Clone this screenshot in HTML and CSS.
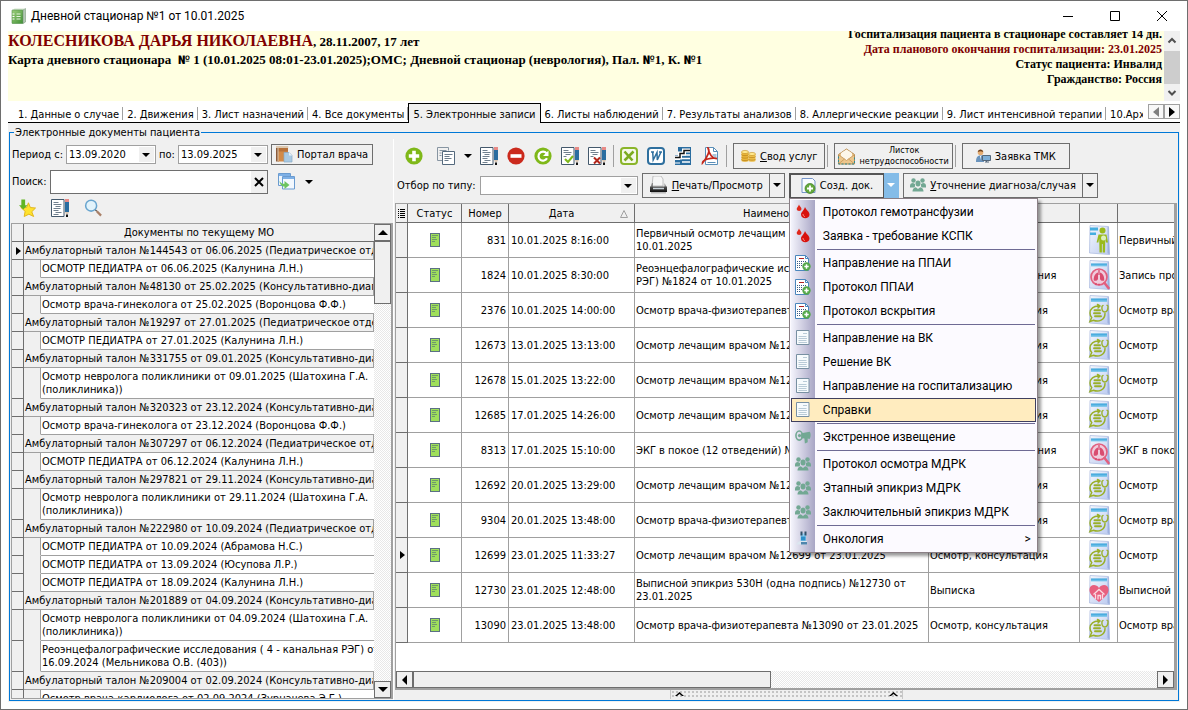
FILE: index.html
```html
<!DOCTYPE html>
<html lang="ru">
<head>
<meta charset="utf-8">
<title>Дневной стационар №1 от 10.01.2025</title>
<link rel="stylesheet" href="styles.css">
</head>
<body>
<svg class="sprite" aria-hidden="true">
  <defs>
    <linearGradient id="gBook" x1="0" y1="0" x2="1" y2="1"><stop offset="0" stop-color="#9fd07c"/><stop offset="1" stop-color="#3f8f35"/></linearGradient>
    <linearGradient id="gDoc" x1="0" y1="0" x2="1" y2="1"><stop offset="0" stop-color="#f4f7fd"/><stop offset="1" stop-color="#bccbf0"/></linearGradient>
    <linearGradient id="gBar" x1="0" y1="0" x2="0" y2="1"><stop offset="0" stop-color="#2f9fd8"/><stop offset="1" stop-color="#8fd0f0"/></linearGradient>
    <linearGradient id="gPrn" x1="0" y1="0" x2="0" y2="1"><stop offset="0" stop-color="#555"/><stop offset="1" stop-color="#111"/></linearGradient>
    <symbol id="status" viewBox="0 0 10 14"><rect x=".5" y=".5" width="9" height="13" fill="#9fe05a" stroke="#5b7083"/><path d="M2 2.500h6M2 4.500h4M2 6.500h5M2 8.500h3" stroke="#6f9a6a"/></symbol>
    <symbol id="page" viewBox="0 0 24 32"><path d="M3 1.500L21.500 2.500L22.500 30.500L2.500 29Z" fill="url(#gDoc)" stroke="#a9b9de" stroke-width=".7"/><path d="M20.500 3v26l2 1.500L21.500 3Z" fill="#8fa5d8" opacity=".7"/></symbol>
    <symbol id="d-exam" viewBox="0 0 24 32"><use href="#page"/><rect x="4" y="4.500" width="16" height="3.500" fill="url(#gBar)"/><g fill="none" stroke="#9ab02a" stroke-width="1.500" stroke-linecap="round"><path d="M12.500 12C6.500 11.500 3 15 3 19c0 2 .7 3.500 1.700 4.500L3 27.500l3.500-1.300C11.500 28.500 18 26 18 19.500M13 12l-2.500-1.500M13 12l-2 2"/><path d="M7.500 16.200h5.500M7 19.200h6M8 22.200h6" stroke-width="1.900"/><path d="M15 12.500c-.5 3.500.8 5.500 2.800 5.500s3.500-2.500 3.200-6M15 12.300l1-.8M21 12l-1-.7" stroke-width="1.400"/></g></symbol>
    <symbol id="d-lung" viewBox="0 0 24 32"><use href="#page"/><rect x="4" y="4.500" width="16" height="3" fill="url(#gBar)"/><circle cx="12" cy="18" r="8" fill="#f0cbdc" stroke="#e2607f" stroke-width="1.700"/><path d="M17.500 24l4 5" stroke="#e2607f" stroke-width="2.600" stroke-linecap="round"/><path d="M11 13.500c-3.500 1-4.500 5-4.200 8 2 .8 4.200-.3 4.200-1.800zM13 13.500c3.500 1 4.500 5 4.200 8-2 .8-4.200-.3-4.200-1.800z" fill="#d94d70"/><path d="M12 11v5M8 25h2M11 25.500h2" stroke="#d94d70" stroke-width="1.300"/></symbol>
    <symbol id="d-man" viewBox="0 0 24 32"><use href="#page"/><path d="M3 3.500h8v3H3zM3 8.500h6v2.500H3z" fill="#45aee0"/><circle cx="15.500" cy="6.500" r="3" fill="#9aba1c"/><path d="M11.500 10.500h8l1.500 8h-2l-.7-4-.3 14h-2.300v-8.500h-.8V28.500h-2.400l-.3-14-.8 4h-1.800z" fill="#9aba1c"/><circle cx="16.500" cy="14" r="2.500" fill="#dcefc0"/></symbol>
    <symbol id="d-heart" viewBox="0 0 24 32"><use href="#page"/><rect x="4" y="4.500" width="16" height="3" fill="url(#gBar)"/><path d="M12 28C5 22.500 2 19 2.500 15 3 10.500 9 9.500 12 14c3-4.500 9-3.500 9.500 1 .5 4-2.500 7.500-9.500 13z" fill="#e8607f"/><path d="M6.500 20.500L12 15.500l5.500 5M8.500 20v5M15.500 20v5M11 25.500v-4h2.500v4" fill="none" stroke="#fbd9e2" stroke-width="1.300"/></symbol>
    <symbol id="i-book" viewBox="0 0 16 16"><path d="M2 2l1.500-1.500h10L12.500 2z" fill="#d7e6d2"/><rect x="1" y="2" width="11" height="13.500" rx=".5" fill="url(#gBook)" stroke="#4f8f46" stroke-width=".6"/><path d="M12 2l2.500-1.500V14L12 15.500z" fill="#b5c9b6" stroke="#6c8f6c" stroke-width=".5"/><path d="M5.500 6h4M5.500 8.500h4M5.500 11h4" stroke="#e6f5dc"/><path d="M1.500 6h2M1.500 8.500h2M1.500 11h2" stroke="#fff"/></symbol>
    <symbol id="i-add" viewBox="0 0 18 18"><circle cx="9" cy="9" r="8.600" fill="#7fb819"/><path d="M9 3.800v10.400M3.800 9h10.400" stroke="#fff" stroke-width="3.600"/></symbol>
    <symbol id="i-copy" viewBox="0 0 18 18"><path d="M.5.500h11v3M.5.500v13h5M2.500 3.500h7M2.500 6h2M2.500 8.500h2" fill="none" stroke="#8795a2"/><path d="M5.500 4.500h12v13h-12z" fill="#fff" stroke="#54697d"/><path d="M7.500 7.500h8M7.500 9.500h5M7.500 11.500h7M7.500 13.500h4" stroke="#6b7b8b"/></symbol>
    <symbol id="i-edit" viewBox="0 0 19 18"><path d="M.5.500h12.500v17H.5z" fill="#fff" stroke="#44596c"/><path d="M2.500 3.500h5M2.500 5.500h8M4.500 7.500h5M2.500 9.500h7M2.500 11.500h5M4.500 13.500h6M2.500 15.500h5" stroke="#71808e"/><path d="M14 0h4v3h-4z" fill="#e88a86"/><path d="M14 3h4v10h-4z" fill="#2a6da0"/><path d="M14 13h4l-1 2h-2z" fill="#d9c7b5"/><path d="M15 15.500h2V18h-2z" fill="#111"/></symbol>
    <symbol id="i-ok" viewBox="0 0 19 18"><path d="M.5.500h12.500v17H.5z" fill="#fff" stroke="#44596c"/><path d="M2.500 3.500h5M2.500 5.500h8M4.500 7.500h5M2.500 9.500h3" stroke="#71808e"/><path d="M14 0h4v3h-4z" fill="#e88a86"/><path d="M14 3h4v10h-4z" fill="#2a6da0"/><path d="M14 13h4l-1 2h-2z" fill="#d9c7b5"/><path d="M15 15.500h2V18h-2z" fill="#111"/><path d="M4 12l3 3 5-6" fill="none" stroke="#7fb819" stroke-width="2"/></symbol>
    <symbol id="i-no" viewBox="0 0 19 18"><path d="M.5.500h12.500v17H.5z" fill="#fff" stroke="#44596c"/><path d="M2.500 3.500h5M2.500 5.500h8M4.500 7.500h5M2.500 9.500h3" stroke="#71808e"/><path d="M14 0h4v3h-4z" fill="#e88a86"/><path d="M14 3h4v10h-4z" fill="#2a6da0"/><path d="M14 13h4l-1 2h-2z" fill="#d9c7b5"/><path d="M15 15.500h2V18h-2z" fill="#111"/><path d="M6 10.500l6 6M12 10.500l-6 6" fill="none" stroke="#b3261b" stroke-width="2"/></symbol>
    <symbol id="i-del" viewBox="0 0 18 18"><circle cx="9" cy="9" r="8.600" fill="#cb2a1d"/><path d="M3.500 9h11" stroke="#fff" stroke-width="3.600"/></symbol>
    <symbol id="i-ref" viewBox="0 0 18 18"><circle cx="9" cy="9" r="8.600" fill="#7fb819"/><path d="M12.500 6.300A4.500 4.500 0 1 0 13 11.200" fill="none" stroke="#fff" stroke-width="2.200"/><path d="M14.500 3.500V9H9z" fill="#fff"/></symbol>
    <symbol id="i-xls" viewBox="0 0 18 18"><rect x="1" y="1" width="16" height="16" rx="3" fill="#f5f8ea" stroke="#8ab52a" stroke-width="2"/><path d="M4.500 4.500l8 9M13.500 4.500l-9 9" fill="none" stroke="#7cab20" stroke-width="2.600"/></symbol>
    <symbol id="i-doc" viewBox="0 0 18 18"><rect x="1" y="1" width="16" height="16" rx="3" fill="#fff" stroke="#2e6f9e" stroke-width="2"/><path d="M4 5h3M5.700 5l.5 8L10 5.500l.3 7.500 3.700-8M12 5h3" fill="none" stroke="#2e6f9e" stroke-width="1.500"/></symbol>
    <symbol id="i-calc" viewBox="0 0 18 18"><path d="M4 0h13v18H1V8h3z" fill="#2a6da0"/><path d="M8 8h8M8 11.500h8M8 15h8" stroke="#fff" stroke-width="1.600"/><path d="M1 12.500h5M1 16h5" stroke="#fff" stroke-width="1.200"/><path d="M1 10.500h5v-4h4V3.500h6" fill="none" stroke="#fff" stroke-width="4"/><path d="M1 10.500h5v-4h4V3.500h6" fill="none" stroke="#111" stroke-width="1.500"/></symbol>
    <symbol id="i-pdf" viewBox="0 0 17 18"><path d="M4 .5h8l4 4v13H4z" fill="#fff" stroke="#5a8fb8"/><path d="M12 .5v4h4M11 8h4M12 10h3M6 15.500h8" fill="none" stroke="#5a8fb8"/><path d="M6.500 1c2 2 .5 8-5.500 15 0-3 9-6 14.500-4.500C11 12 7.500 7 6.500 1z" fill="none" stroke="#c4281c" stroke-width="1.700"/></symbol>
    <symbol id="i-exp" viewBox="0 0 17 17"><path d="M.5.500h12v12H.5z" fill="#eef5fd" stroke="#6a9bd0"/><path d="M1 1h11v2H1z" fill="#7eb0e6"/><path d="M4.500 3.500h12v12.500h-12z" fill="#f3f8fe" stroke="#6a9bd0"/><path d="M5 4h11v2H5z" fill="#7eb0e6"/><path d="M1.500 8c1 2 3 2.800 5 2.800V8l5 4-5 4v-2.500C4 13.500 2 12 1.500 8z" fill="#6cc45f"/></symbol>
    <symbol id="i-star" viewBox="0 0 18 19"><path d="M10 4l2 5 5.500.5-4 4 2 5-5-2.500-5 2.500 1-5.500-4.500-4h6z" fill="#ffe22e" stroke="#dfb419"/><path d="M2.500.500h4v6H9L4.500 11 0 6.500h2.500z" fill="#62b523"/></symbol>
    <symbol id="i-find" viewBox="0 0 19 19"><circle cx="7" cy="7" r="5.800" fill="#e2f3fb" stroke="#68a5cf" stroke-width="1.600"/><path d="M11.500 11.500l1.500 1.500" stroke="#555" stroke-width="1.400"/><path d="M13 13l4.500 4.500" stroke="#aa8068" stroke-width="2.400"/></symbol>
    <symbol id="i-port" viewBox="0 0 17 16"><path d="M0 1h3v14H0z" fill="#8a5a3a"/><path d="M2 1h10v14H2z" fill="#d28a48"/><path d="M2 1h10v4H2z" fill="#b6713a"/><path d="M2 1v14M0 0h12v1H0z" fill="#dcc8b0" stroke="#dcc8b0"/><path d="M8 6h5l3 3v6.500H8z" fill="#a9c9e2" stroke="#88a9c6" stroke-width=".7"/><path d="M13 6v3h3z" fill="#e8f3fa"/></symbol>
    <symbol id="i-print" viewBox="0 0 19 18"><path d="M4 0h8l2 3v7H3z" fill="#f6f6f6" stroke="#aaa" stroke-width=".7"/><path d="M3 7l-1.500 4h16L15.500 7v4H4V7z" fill="#888"/><path d="M1 10.500h17V16H1z" fill="url(#gPrn)"/><path d="M4 12.500h11" stroke="#c9d2d8" stroke-width="1.500"/><path d="M2 16h15v1.500H2z" fill="#bbb"/></symbol>
    <symbol id="i-coin" viewBox="0 0 15 14"><path d="M.5 3v9c0 1 7 1 7 0V3z" fill="#e9b53a"/><ellipse cx="4" cy="3" rx="3.500" ry="1.600" fill="#ffe88e" stroke="#c48d1d" stroke-width=".6"/><path d="M.5 5.500c0 1.500 7 1.500 7 0M.5 8c0 1.500 7 1.500 7 0M.5 10.500c0 1.500 7 1.500 7 0" fill="none" stroke="#b67f18" stroke-width=".7"/><path d="M7.500 5v7c0 1 7 1 7 0V5z" fill="#edbf4c"/><ellipse cx="11" cy="5" rx="3.500" ry="1.600" fill="#ffe88e" stroke="#c48d1d" stroke-width=".6"/><path d="M7.500 7.500c0 1.500 7 1.500 7 0M7.500 10c0 1.500 7 1.500 7 0" fill="none" stroke="#b67f18" stroke-width=".7"/></symbol>
    <symbol id="i-mail" viewBox="0 0 17 16"><path d="M.5 6L8.500.5l8 5.500v9.500H.5z" fill="#ecc68c" stroke="#b98d52"/><path d="M3 4.500L8.500 1l5.500 3.500V8L8.500 12 3 8z" fill="#fdf7ea"/><path d="M1 6.500L8.500 12 16 6.500M1 15l5.500-4.500M16 15l-5.500-4.500" fill="none" stroke="#c79b5f" stroke-width=".9"/><path d="M.5 8v7.500h16V8" fill="none" stroke="#2d8c97" stroke-dasharray="2 1.500"/></symbol>
    <symbol id="i-tmk" viewBox="0 0 15 14"><circle cx="4.500" cy="3.500" r="2.800" fill="#e6ad72"/><path d="M1.800 3C2-.5 7-.5 7.200 3 5.500 2 3.500 2 1.800 3z" fill="#6b3f1c"/><path d="M0 13c0-4 1-6.500 4.500-6.500S8 8 8 13z" fill="#6a94bd"/><path d="M4 7h1v4z" fill="#fff"/><path d="M6.500 6.500h8v5h-8z" fill="#7dafd9" stroke="#54677a"/><path d="M9 13h4M10.500 12v1" stroke="#54677a"/></symbol>
    <symbol id="i-new" viewBox="0 0 14 16"><path d="M.5.500h10.500l2.500 2.500v11.500H.5z" fill="#f8fbff" stroke="#7695c9"/><circle cx="8.500" cy="10.500" r="5" fill="#64a83c" stroke="#3f7d23" stroke-width=".7"/><path d="M8.500 7.500v6M5.500 10.500h6" stroke="#fff" stroke-width="1.800"/></symbol>
    <symbol id="i-team" viewBox="0 0 16 14"><g fill="#72a893"><circle cx="3.500" cy="2.500" r="2.200"/><circle cx="12.500" cy="2.500" r="2.200"/><ellipse cx="8" cy="5.500" rx="2.500" ry="3"/><path d="M0 8c0-2 1-3 3-3l2 1v2.500L4 9.500H0zM16 8c0-2-1-3-3-3l-2 1v2.500l1 1h4zM2.500 13.500c0-2.500 1-3.700 3.300-4.300L8 11l2.200-1.800c2.300.6 3.300 1.800 3.300 4.300z"/></g></symbol>
    <symbol id="i-drop" viewBox="0 0 14 14"><path d="M9 2.500c1 3 4.500 4.500 4.500 7.500 0 5-8.500 5-8.500 0 0-2.500 3-4 4-7.500z" fill="#d8120c"/><path d="M3 0c.5 2 2.500 2.500 2.500 4.500C5.500 7 .7 7 .7 4.500.7 3 2.500 2 3 0z" fill="#e0281c"/><path d="M7 9.500c0 1.500.7 2.500 2 2.500" stroke="#ff8c80" fill="none"/></symbol>
    <symbol id="i-form" viewBox="0 0 16 16"><path d="M.5.500h10l3 3v12H.5z" fill="#fff" stroke="#4a86bd"/><path d="M10.500.5v3h3" fill="none" stroke="#4a86bd"/><path d="M4 3.500h5" stroke="#b32020"/><path d="M2 6.500h9M2 8.500h6M2 10.500h5M2 12.500h4" stroke="#3a5a80" stroke-dasharray="1 1"/><circle cx="11.500" cy="11.500" r="4.200" fill="#55a84a"/><path d="M11.500 9.300v4.400M9.300 11.500h4.400" stroke="#fff" stroke-width="1.500"/></symbol>
    <symbol id="i-list" viewBox="0 0 14 15"><path d="M.5.500h12.500v14H.5z" fill="#f7fbfd" stroke="#7890a2"/><path d="M7 3.500h4M2.500 6.500h8M2.500 8.500h8.500M2.500 10.500h8M2.500 12.500h8.500" stroke="#b9cbd7"/></symbol>
    <symbol id="i-horn" viewBox="0 0 17 15"><path d="M6.500 3.500L15.500 2c1.500 1 1.500 6 0 7.500L13.500 9v4l-3 1.500L10 9 6.500 8.500z" fill="#72a893"/><ellipse cx="4.500" cy="6" rx="3.500" ry="4.800" fill="none" stroke="#72a893" stroke-width="1.700"/><circle cx="4.800" cy="6" r="1.700" fill="#72a893"/></symbol>
    <symbol id="i-onco" viewBox="0 0 14 14"><path d="M4.500 2h5.500v8H4.500z" fill="#8fcdf0"/><path d="M4.500 0h2v4h-2zM8.500 0h2v4h-2z" fill="#31506a"/><path d="M5 5h4.500v4H5z" fill="#2c8fc8"/><path d="M0 13c2-3 3-3.500 5-3.500h6V13z" fill="#dbe6ef"/><path d="M5 10.500h6v2.500H5z" fill="#4f86ad"/></symbol>
  </defs>
</svg>

<header class="titlebar">
  <svg class="ic16"><use href="#i-book"/></svg>
  <h1>Дневной стационар №1 от 10.01.2025</h1>
  <div class="winbtns">
    <button aria-label="Свернуть"><svg width="12" height="12"><path d="M1 6.500h10" stroke="#000"/></svg></button>
    <button aria-label="Развернуть"><svg width="12" height="12"><path d="M1.500 1.500h9v9h-9z" fill="none" stroke="#000"/></svg></button>
    <button aria-label="Закрыть"><svg width="12" height="12"><path d="M1 1l10 10M11 1L1 11" stroke="#000"/></svg></button>
  </div>
</header>

<section class="patient">
  <div class="who">
    <p><span class="name">КОЛЕСНИКОВА ДАРЬЯ НИКОЛАЕВНА</span>, 28.11.2007, 17 лет</p>
    <p class="card">Карта дневного стационара &nbsp;<span class="no">№</span> 1 (10.01.2025 08:01-23.01.2025);ОМС; Дневной стационар (неврология), Пал. <span class="no">№</span>1, К. <span class="no">№</span>1</p>
  </div>
  <div class="info">
    <p>Госпитализация пациента в стационаре составляет 14 дн.</p>
    <p class="plan">Дата планового окончания госпитализации: 23.01.2025</p>
    <p>Статус пациента: Инвалид</p>
    <p>Гражданство: Россия</p>
  </div>
  <div class="vbar" aria-hidden="true">
    <svg width="16" height="20"><path d="M4.500 11.500L8 8l3.500 3.500" fill="none" stroke="#505050" stroke-width="2"/></svg>
    <i></i>
    <svg width="16" height="17"><path d="M4.500 7L8 10.500 11.500 7" fill="none" stroke="#505050" stroke-width="2"/></svg>
  </div>
</section>

<nav class="tabs">
  <div class="tablist">
    <a href="#t1">1. Данные о случае</a><a href="#t2">2. Движения</a><a href="#t3">3. Лист назначений</a><a href="#t4">4. Все документы</a><a href="#t5" class="active">5. Электронные записи</a><a href="#t6">6. Листы наблюдений</a><a href="#t7">7. Результаты анализов</a><a href="#t8">8. Аллергические реакции</a><a href="#t9">9. Лист интенсивной терапии</a><a href="#t10">10.Архив</a>
  </div>
  <div class="tabscroll">
    <button aria-label="Назад"><svg width="6" height="10"><path d="M6 0v10L0 5z" fill="#808080"/></svg></button>
    <button aria-label="Вперёд"><svg width="6" height="10"><path d="M0 0v10l6-5z"/></svg></button>
  </div>
</nav>

<main class="sheet">
<fieldset>
  <legend>Электронные документы пациента</legend>
  <div class="split">

  <section class="left">
    <div class="bar period">
      <label for="from">Период с:</label>
      <span class="combo date"><select id="from"><option>13.09.2020</option></select></span>
      <label for="to">по:</label>
      <span class="combo date"><select id="to"><option>13.09.2025</option></select></span>
      <button class="btn"><svg class="ic17"><use href="#i-port"/></svg>Портал врача</button>
    </div>
    <div class="bar search">
      <label for="q">Поиск:</label>
      <span class="field"><input id="q" type="text"><button aria-label="Очистить"><svg width="12" height="12"><path d="M2 2l8 8M10 2l-8 8" stroke="#000" stroke-width="2"/></svg></button></span>
      <button class="tool" aria-label="Выгрузить"><svg class="ic17"><use href="#i-exp"/></svg></button>
      <button class="tool arrow" aria-label="Ещё"></button>
    </div>
    <div class="bar icons">
      <button class="tool" aria-label="В избранное"><svg class="ic19"><use href="#i-star"/></svg></button>
      <button class="tool" aria-label="Редактировать"><svg class="ic19"><use href="#i-edit"/></svg></button>
      <button class="tool" aria-label="Найти"><svg class="ic19"><use href="#i-find"/></svg></button>
    </div>
    <div class="docs">
      <div class="doclist">
      <table class="tree">
        <colgroup><col class="c-ind"><col class="c-indent"><col></colgroup>
        <thead><tr><th></th><th colspan="2">Документы по текущему МО</th></tr></thead>
        <tbody>
        <tr class="g cur"><td></td><td colspan="2">Амбулаторный талон №144543 от 06.06.2025 (Педиатрическое отделение)</td></tr>
        <tr><td></td><td></td><td>ОСМОТР ПЕДИАТРА от 06.06.2025 (Калунина Л.Н.)</td></tr>
        <tr class="g"><td></td><td colspan="2">Амбулаторный талон №48130 от 25.02.2025 (Консультативно-диагностическое)</td></tr>
        <tr><td></td><td></td><td>Осмотр врача-гинеколога от 25.02.2025 (Воронцова Ф.Ф.)</td></tr>
        <tr class="g"><td></td><td colspan="2">Амбулаторный талон №19297 от 27.01.2025 (Педиатрическое отделение)</td></tr>
        <tr><td></td><td></td><td>ОСМОТР ПЕДИАТРА от 27.01.2025 (Калунина Л.Н.)</td></tr>
        <tr class="g"><td></td><td colspan="2">Амбулаторный талон №331755 от 09.01.2025 (Консультативно-диагностическое)</td></tr>
        <tr class="two"><td></td><td></td><td>Осмотр невролога поликлиники от 09.01.2025 (Шатохина Г.А.<br>(поликлиника))</td></tr>
        <tr class="g"><td></td><td colspan="2">Амбулаторный талон №320323 от 23.12.2024 (Консультативно-диагностическое)</td></tr>
        <tr><td></td><td></td><td>Осмотр врача-гинеколога от 23.12.2024 (Воронцова Ф.Ф.)</td></tr>
        <tr class="g"><td></td><td colspan="2">Амбулаторный талон №307297 от 06.12.2024 (Педиатрическое отделение)</td></tr>
        <tr><td></td><td></td><td>ОСМОТР ПЕДИАТРА от 06.12.2024 (Калунина Л.Н.)</td></tr>
        <tr class="g"><td></td><td colspan="2">Амбулаторный талон №297821 от 29.11.2024 (Консультативно-диагностическое)</td></tr>
        <tr class="two"><td></td><td></td><td>Осмотр невролога поликлиники от 29.11.2024 (Шатохина Г.А.<br>(поликлиника))</td></tr>
        <tr class="g"><td></td><td colspan="2">Амбулаторный талон №222980 от 10.09.2024 (Педиатрическое отделение)</td></tr>
        <tr><td></td><td></td><td>ОСМОТР ПЕДИАТРА от 10.09.2024 (Абрамова Н.С.)</td></tr>
        <tr><td></td><td></td><td>ОСМОТР ПЕДИАТРА от 13.09.2024 (Юсупова Л.Р.)</td></tr>
        <tr><td></td><td></td><td>ОСМОТР ПЕДИАТРА от 18.09.2024 (Калунина Л.Н.)</td></tr>
        <tr class="g"><td></td><td colspan="2">Амбулаторный талон №201889 от 04.09.2024 (Консультативно-диагностическое)</td></tr>
        <tr class="two"><td></td><td></td><td>Осмотр невролога поликлиники от 04.09.2024 (Шатохина Г.А.<br>(поликлиника))</td></tr>
        <tr class="two"><td></td><td></td><td>Реоэнцефалографические исследования ( 4 - канальная РЭГ) от<br>16.09.2024 (Мельникова О.В. (403))</td></tr>
        <tr class="g"><td></td><td colspan="2">Амбулаторный талон №209004 от 02.09.2024 (Консультативно-диагностическое)</td></tr>
        <tr><td></td><td></td><td>Осмотр врача-кардиолога от 02.09.2024 (Зурначева Э.Г.)</td></tr>
        </tbody>
      </table>
      </div>
      <div class="scroll vert" aria-hidden="true"><b class="up"></b><i></i><b class="down"></b></div>
    </div>
  </section>

  <section class="right">
    <div class="bar tools">
      <button class="tool" aria-label="Добавить"><svg class="ic18"><use href="#i-add"/></svg></button>
      <button class="tool copy" aria-label="Копировать"><svg class="ic18"><use href="#i-copy"/></svg></button>
      <button class="tool arrow" aria-label="Варианты копирования"></button>
      <button class="tool" aria-label="Изменить"><svg class="ic19"><use href="#i-edit"/></svg></button>
      <button class="tool" aria-label="Удалить"><svg class="ic18"><use href="#i-del"/></svg></button>
      <button class="tool" aria-label="Обновить"><svg class="ic18"><use href="#i-ref"/></svg></button>
      <button class="tool" aria-label="Подписать"><svg class="ic19"><use href="#i-ok"/></svg></button>
      <button class="tool" aria-label="Снять подпись"><svg class="ic19"><use href="#i-no"/></svg></button>
      <span class="vsep"></span>
      <button class="tool" aria-label="Excel"><svg class="ic18"><use href="#i-xls"/></svg></button>
      <button class="tool" aria-label="Word"><svg class="ic18"><use href="#i-doc"/></svg></button>
      <button class="tool" aria-label="Calc"><svg class="ic18"><use href="#i-calc"/></svg></button>
      <button class="tool" aria-label="PDF"><svg class="ic18"><use href="#i-pdf"/></svg></button>
      <span class="vsep"></span>
      <button class="btn tall"><svg class="ic15"><use href="#i-coin"/></svg><span><u>С</u>вод услуг</span></button>
      <span class="vsep"></span>
      <button class="btn tall sick"><svg class="ic17"><use href="#i-mail"/></svg><span>Листок<br>нетрудоспособности</span></button>
      <span class="vsep"></span>
      <button class="btn tall tmk"><svg class="ic15"><use href="#i-tmk"/></svg>Заявка ТМК</button>
    </div>
    <div class="bar filter">
      <label for="type">Отбор по типу:</label>
      <span class="combo type"><select id="type"><option></option></select></span>
      <span class="duo"><button class="btn"><svg class="ic19"><use href="#i-print"/></svg><span><u>П</u>ечать/Просмотр</span></button><button class="btn drop" aria-label="Варианты печати"></button></span>
      <span class="duo create"><button class="btn pressed"><svg class="ic15"><use href="#i-new"/></svg>Созд. док.</button><button class="btn drop open" aria-label="Список документов"></button>
        <ul class="menu">
          <li><button><svg class="ic14"><use href="#i-drop"/></svg>Протокол гемотрансфузии</button></li>
          <li><button><svg class="ic14"><use href="#i-drop"/></svg>Заявка - требование КСПК</button></li>
          <li class="line"></li>
          <li><button><svg class="ic16"><use href="#i-form"/></svg>Направление на ППАИ</button></li>
          <li><button><svg class="ic16"><use href="#i-form"/></svg>Протокол ППАИ</button></li>
          <li><button><svg class="ic16"><use href="#i-form"/></svg>Протокол вскрытия</button></li>
          <li class="line"></li>
          <li><button><svg class="ic14"><use href="#i-list"/></svg>Направление на ВК</button></li>
          <li><button><svg class="ic14"><use href="#i-list"/></svg>Решение ВК</button></li>
          <li><button><svg class="ic14"><use href="#i-list"/></svg>Направление на госпитализацию</button></li>
          <li><button class="hot"><svg class="ic14"><use href="#i-list"/></svg>Справки</button></li>
          <li class="line"></li>
          <li><button><svg class="ic16"><use href="#i-horn"/></svg>Экстренное извещение</button></li>
          <li class="line"></li>
          <li><button><svg class="ic16"><use href="#i-team"/></svg>Протокол осмотра МДРК</button></li>
          <li><button><svg class="ic16"><use href="#i-team"/></svg>Этапный эпикриз МДРК</button></li>
          <li><button><svg class="ic16"><use href="#i-team"/></svg>Заключительный эпикриз МДРК</button></li>
          <li class="line"></li>
          <li><button><svg class="ic14"><use href="#i-onco"/></svg>Онкология<span class="more">&gt;</span></button></li>
        </ul>
      </span>
      <span class="duo"><button class="btn"><svg class="ic16"><use href="#i-team"/></svg><span><u>У</u>точнение диагноза/случая</span></button><button class="btn drop" aria-label="Варианты уточнения"></button></span>
    </div>

    <div class="gridbox">
      <div class="gridview">
      <table class="grid">
        <colgroup><col class="c-ind"><col class="c-st"><col class="c-num"><col class="c-date"><col class="c-name"><col class="c-type"><col class="c-ico"><col></colgroup>
        <thead><tr><th><svg width="7" height="9"><path d="M0 .5h1M0 2.500h1M0 4.500h1M0 6.500h1M0 8.500h1M2 .5h5M2 2.500h5M2 4.500h5M2 6.500h5M2 8.500h5" stroke="#000"/></svg></th><th>Статус</th><th>Номер</th><th class="sorted">Дата<svg width="8" height="8"><path d="M.5 7.500h7L4 .5z" fill="none" stroke="#a0a0a0"/></svg></th><th>Наименование</th><th></th><th></th><th></th></tr></thead>
        <tbody>
        <tr><td></td><td><svg class="st"><use href="#status"/></svg></td><td>831</td><td>10.01.2025 8:16:00</td><td>Первичный осмотр лечащим врачом №831 от<br>10.01.2025</td><td>Первичный осмотр</td><td><svg class="dc"><use href="#d-man"/></svg></td><td>Первичный осмотр</td></tr>
        <tr><td></td><td><svg class="st"><use href="#status"/></svg></td><td>1824</td><td>10.01.2025 8:30:00</td><td>Реоэнцефалографические исследования (канальная<br>РЭГ) №1824 от 10.01.2025</td><td>Протокол исследования</td><td><svg class="dc"><use href="#d-lung"/></svg></td><td>Запись протокола</td></tr>
        <tr><td></td><td><svg class="st"><use href="#status"/></svg></td><td>2376</td><td>10.01.2025 14:00:00</td><td>Осмотр врача-физиотерапевта №2376 от 10.01.2025</td><td>Осмотр, консультация</td><td><svg class="dc"><use href="#d-exam"/></svg></td><td>Осмотр врача</td></tr>
        <tr><td></td><td><svg class="st"><use href="#status"/></svg></td><td>12673</td><td>13.01.2025 13:13:00</td><td>Осмотр лечащим врачом №12673 от 13.01.2025</td><td>Осмотр, консультация</td><td><svg class="dc"><use href="#d-exam"/></svg></td><td>Осмотр</td></tr>
        <tr><td></td><td><svg class="st"><use href="#status"/></svg></td><td>12678</td><td>15.01.2025 13:22:00</td><td>Осмотр лечащим врачом №12678 от 15.01.2025</td><td>Осмотр, консультация</td><td><svg class="dc"><use href="#d-exam"/></svg></td><td>Осмотр</td></tr>
        <tr><td></td><td><svg class="st"><use href="#status"/></svg></td><td>12685</td><td>17.01.2025 14:26:00</td><td>Осмотр лечащим врачом №12685 от 17.01.2025</td><td>Осмотр, консультация</td><td><svg class="dc"><use href="#d-exam"/></svg></td><td>Осмотр</td></tr>
        <tr><td></td><td><svg class="st"><use href="#status"/></svg></td><td>8313</td><td>17.01.2025 15:10:00</td><td>ЭКГ в покое (12 отведений) №8313 от 17.01.2025</td><td>Протокол исследования</td><td><svg class="dc"><use href="#d-lung"/></svg></td><td>ЭКГ в покое</td></tr>
        <tr><td></td><td><svg class="st"><use href="#status"/></svg></td><td>12692</td><td>20.01.2025 13:29:00</td><td>Осмотр лечащим врачом №12692 от 20.01.2025</td><td>Осмотр, консультация</td><td><svg class="dc"><use href="#d-exam"/></svg></td><td>Осмотр</td></tr>
        <tr><td></td><td><svg class="st"><use href="#status"/></svg></td><td>9304</td><td>20.01.2025 13:48:00</td><td>Осмотр врача-физиотерапевта №9304 от 20.01.2025</td><td>Осмотр, консультация</td><td><svg class="dc"><use href="#d-exam"/></svg></td><td>Осмотр врача</td></tr>
        <tr class="cur"><td></td><td><svg class="st"><use href="#status"/></svg></td><td>12699</td><td>23.01.2025 11:33:27</td><td>Осмотр лечащим врачом №12699 от 23.01.2025</td><td>Осмотр, консультация</td><td><svg class="dc"><use href="#d-exam"/></svg></td><td>Осмотр</td></tr>
        <tr><td></td><td><svg class="st"><use href="#status"/></svg></td><td>12730</td><td>23.01.2025 12:48:00</td><td>Выписной эпикриз 530Н (одна подпись) №12730 от<br>23.01.2025</td><td>Выписка</td><td><svg class="dc"><use href="#d-heart"/></svg></td><td>Выписной эпикриз</td></tr>
        <tr><td></td><td><svg class="st"><use href="#status"/></svg></td><td>13090</td><td>23.01.2025 13:48:00</td><td>Осмотр врача-физиотерапевта №13090 от 23.01.2025</td><td>Осмотр, консультация</td><td><svg class="dc"><use href="#d-exam"/></svg></td><td>Осмотр врача</td></tr>
        </tbody>
      </table>
      </div>
      <div class="scroll horz" aria-hidden="true"><b class="prev"></b><i></i><b class="next"></b></div>
    </div>
    <div class="grip"><div><svg width="9" height="5"><path d="M0 5l4.500-4L9 5H7L4.500 3 2 5z"/></svg><svg width="9" height="5"><path d="M0 5l4.500-4L9 5H7L4.500 3 2 5z"/></svg></div></div>
  </section>
  </div>
</fieldset>
</main>
</body>
</html>
```
FILE: styles.css
```css
* { box-sizing: border-box; }
body {
  margin: 0;
  height: 100vh;
  display: flex;
  flex-direction: column;
  overflow: hidden;
  border: 1px solid #6e6e6e;
  background: #fff;
  color: #000;
  font: 11px/13px "DejaVu Sans Condensed", "DejaVu Sans", sans-serif;
}
button, input, select { font: inherit; color: inherit; margin: 0; }
button { padding: 0; border: 0; background: none; }
p, h1, ul { margin: 0; padding: 0; }
svg { flex: none; display: block; }
.sprite { position: absolute; width: 0; height: 0; }
.ic14 { width: 14px; height: 15px; }
.ic15 { width: 15px; height: 16px; }
.ic16 { width: 16px; height: 16px; }
.ic17 { width: 17px; height: 17px; }
.ic18 { width: 18px; height: 18px; }
.ic19 { width: 19px; height: 18px; }

/* window caption */
.titlebar {
  flex: none;
  height: 30px;
  display: flex;
  align-items: center;
  gap: 4px;
  padding: 0 2px 0 10px;
}
.titlebar h1 { flex: 1; font: 12px/16px Roboto, sans-serif; }
.winbtns { display: flex; }
.winbtns button { width: 47px; height: 30px; display: grid; place-items: center; }

/* patient banner */
.patient {
  flex: none;
  height: 70px;
  margin: 0 7px;
  display: flex;
  overflow: hidden;
  background: #ffffe1;
  font: bold 13px/18px "Liberation Serif", serif;
  white-space: nowrap;
}
.who { flex: 1; padding-top: 1px; }
.name { font-size: 16px; color: #800000; }
.no { font-family: Roboto, sans-serif; font-size: 12px; font-weight: 900; }
.info { margin-top: -4px; padding-right: 2px; text-align: right; font-size: 12px; line-height: 15px; }
.plan { color: #800000; }
.vbar { width: 16px; display: flex; flex-direction: column; background: #f0f0f0; }
.vbar i { flex: 1; background: #cdcdcd; }

/* tabs */
.tabs { flex: none; height: 22px; margin: 0 7px; display: flex; position: relative; }
.tabs::after { content: ""; position: absolute; left: 0; right: 0; bottom: 0; height: 1px; background: #000; }
.tablist { flex: 1; min-width: 0; display: flex; align-items: flex-end; overflow: hidden; padding-left: 6px; white-space: nowrap; }
.tablist a { flex: none; height: 19px; padding: 4px 4px 2px; color: #000; text-decoration: none; position: relative; }
.tablist a::after { content: ""; position: absolute; right: 0; top: 3px; height: 13px; width: 1px; background: #a0a0a0; }
.tablist .active { z-index: 1; height: 20px; border: 1px solid #000; border-bottom: 0; background: #f0f0f0; }
.tablist .active::after { display: none; }
.tabscroll { display: flex; padding: 3px 0 0 5px; }
.tabscroll button { width: 16px; height: 15px; border: 1px solid #a0a0a0; display: grid; place-items: center; background: #f8f8f8; }

/* sheet */
.sheet { flex: 1; min-height: 0; margin: 0 7px 7px; padding: 3px 1px 1px; background: #f0f0f0; display: flex; }
fieldset {
  flex: 1;
  min-width: 0;
  min-height: 0;
  margin: 0;
  padding: 0;
  border: 1px solid #0078d7;
  display: flex;
  flex-direction: column;
}
legend { margin-left: 4px; padding: 0 1px; line-height: 13px; }
.split { display: flex; height: 100%; min-height: 0; }
.bar { flex: none; display: flex; align-items: center; white-space: nowrap; }
.btn {
  height: 21px;
  padding: 0 4px;
  display: flex;
  align-items: center;
  gap: 4px;
  border: 1px solid #6e6e6e;
  background: #f0f0f0;
}
.combo { position: relative; display: flex; border: 1px solid #a0a0a0; background: #fff; height: 19px; }
.combo select { width: 100%; border: 0; padding: 0 18px 0 2px; background: none; appearance: none; }
.combo::before { content: ""; position: absolute; right: 1px; top: 1px; bottom: 1px; width: 15px; background: #f0f0f0; pointer-events: none; }
.combo::after, .drop::after, .arrow::after {
  content: "";
  width: 0;
  border: 4px solid transparent;
  border-bottom: 0;
  border-top-color: #000;
}
.combo::after { position: absolute; right: 5px; top: 7px; pointer-events: none; }
.arrow::after { display: block; }
.date { width: 90px; }
.type { width: 158px; }

/* left side */
.left { flex: none; width: 384px; display: flex; flex-direction: column; padding: 4px 0 1px 1px; border-right: 1px solid #fff; }
.period { height: 22px; gap: 3px; padding-left: 1px; }
.search { height: 25px; margin-top: 4px; gap: 3px; padding-left: 1px; }
.field { width: 218px; height: 24px; display: flex; border: 1px solid #6e6e6e; background: #fff; }
.field input { flex: 1; min-width: 0; border: 0; padding: 0 4px; outline: 0; background: none; }
.field button { width: 16px; display: grid; place-items: center; background: #f0f0f0; }
.search .tool { margin-left: 7px; }
.icons { height: 26px; gap: 14px; padding: 1px 0 0 7px; }
.docs { flex: 1; min-height: 0; margin-top: 3px; display: flex; border: 1px solid #a0a0a0; border-right-width: 2px; background: #fff; }
.doclist { flex: 1; min-width: 0; overflow: hidden; }
table { width: 100%; table-layout: fixed; border-collapse: separate; border-spacing: 0; }
th, td { padding: 0; font-weight: normal; overflow: hidden; white-space: nowrap; }
th { background: #f0f0f0; border-right: 1px solid #6e6e6e; border-bottom: 1px solid #6e6e6e; text-align: center; }
.c-ind { width: 12px; }
.c-indent { width: 17px; }
.tree th { height: 18px; }
.tree th:last-child { border-right: 0; }
.tree td { height: 18px; padding-left: 1px; border-bottom: 1px solid #a0a0a0; text-align: left; }
.tree .two td { height: 31px; }
.tree td:first-child { background: #f0f0f0; border-right: 1px solid #6e6e6e; border-bottom-color: #6e6e6e; padding: 0; }
.tree td:nth-child(2) { background: #f0f0f0; border-right: 1px solid #a0a0a0; }
.tree td:nth-child(2):not([colspan]) { border-bottom-color: #f0f0f0; }
.cur td:first-child::before { content: ""; display: block; width: 0; margin-left: 4px; border: 4px solid transparent; border-left: 5px solid #000; border-right: 0; }

/* scroll bars */
.scroll { display: flex; background: repeating-conic-gradient(#fff 0 25%, #e8e8e8 0 50%) 0 0 / 2px 2px; }
.scroll b, .scroll i { flex: none; border: 1px solid #6e6e6e; background: #f0f0f0; display: grid; place-items: center; }
.scroll b::after { content: ""; border: 5px solid transparent; }
.vert { width: 17px; flex-direction: column; }
.vert b { height: 17px; }
.vert i { height: 63px; }
.vert .up::after { border-top: 0; border-bottom-color: #000; }
.vert .down { margin-top: auto; }
.vert .down::after { border-bottom: 0; border-top-color: #000; }
.horz { flex: none; height: 17px; }
.horz b { width: 17px; }
.horz i { width: 358px; }
.horz .prev::after { border-left: 0; border-right-color: #000; }
.horz .next { margin-left: auto; }
.horz .next::after { border-right: 0; border-left-color: #000; }

/* right side */
.right { flex: 1; min-width: 0; display: flex; flex-direction: column; padding: 4px 1px 1px 1px; }
.tools { height: 26px; gap: 8px; padding-left: 10px; }
.tools .tool { min-width: 19px; }
.tools .arrow, .arrow { min-width: 8px; width: 8px; }
.tools .copy { margin-left: 5px; }
.vsep { width: 1px; height: 22px; margin: 0 -2px; background: #a0a0a0; }
.tall { height: 26px; padding: 0 7px; }
.tall + .vsep { margin-left: -6px; }
.sick { padding: 0 3px; text-align: center; font-size: 9px; line-height: 11px; }
.tmk { padding: 0 13px; }
.filter { height: 26px; margin-top: 3px; gap: 4px; padding-left: 2px; }
.duo { display: flex; position: relative; }
.duo .btn { height: 25px; padding: 0 6px; }
.duo .drop { width: 15px; padding: 0; border-left: 0; justify-content: center; }
.duo .pressed { padding: 0 10px; border-width: 2px 1px 1px 2px; border-color: #555; }
.duo .open { background: #84bce8; border-color: #84bce8; }
.open::after { border-top-color: #fff; }
.gridbox { flex: 1; min-height: 0; margin-top: 5px; display: flex; flex-direction: column; border: 1px solid #a0a0a0; border-width: 1px 3px 2px 1px; background: #fff; }
.gridview { flex: 1; min-height: 0; overflow: hidden; }
.c-st { width: 54px; }
.c-num { width: 47px; }
.c-date { width: 126px; }
.c-name { width: 294px; }
.c-type { width: 151px; }
.c-ico { width: 38px; }
.grid th { height: 19px; }
.grid th svg { margin: auto; }
.grid .sorted svg { float: right; margin: 3px 6px 0 -14px; }
.grid .sorted { padding-right: 20px; }
.grid .sorted svg { margin: 3px -14px 0 0; }
.grid td { height: 35px; padding-left: 1px; border: 1px solid #a0a0a0; border-width: 0 1px 1px 0; }
.grid td:first-child { background: #f0f0f0; padding: 0; border-color: #6e6e6e; }
.grid td:nth-child(3) { text-align: right; padding-right: 2px; }
.grid td:nth-child(4) { padding-left: 2px; }
.grid td:last-child, .grid th:last-child { border-right: 0; }
.st { width: 10px; height: 14px; margin: auto; }
.dc { width: 24px; height: 32px; margin: auto; }
.grip { flex: none; height: 9px; display: flex; justify-content: center; background: #f0f0f0; }
.grip div { width: 233px; padding: 1px 4px; display: flex; justify-content: space-between; border: 1px solid #c8c8c8; border-width: 0 1px; background: radial-gradient(#c4c4c4 1px, transparent 1px) 0 0 / 4px 4px; }

/* drop-down menu */
.menu {
  position: absolute;
  z-index: 5;
  top: 100%;
  left: 0;
  width: 249px;
  padding: 1px;
  list-style: none;
  border: 1px solid #8a7f85;
  background: linear-gradient(90deg, #f4f4fc, #a8a5c5) 1px 1px / 24px 352px no-repeat #fcfaff;
  box-shadow: 3px 3px 3px #0006;
  font: 12px/16px Roboto, sans-serif;
}
.menu button { width: 100%; height: 24px; display: flex; align-items: center; border: 1px solid transparent; text-align: left; padding-left: 3px; }
.menu svg { margin-right: 12px; }
.menu .ic14 { margin: 0 13px 0 1px; }
.menu .hot { background: #ffecbf; border-color: #3f3f5f; }
.menu .more { margin-left: auto; padding-right: 4px; }
.menu .line { height: 3px; padding-top: 1px; margin: 0 1px 0 26px; }
.menu .line::after { content: ""; display: block; height: 1px; background: #6e6a94; }
```
